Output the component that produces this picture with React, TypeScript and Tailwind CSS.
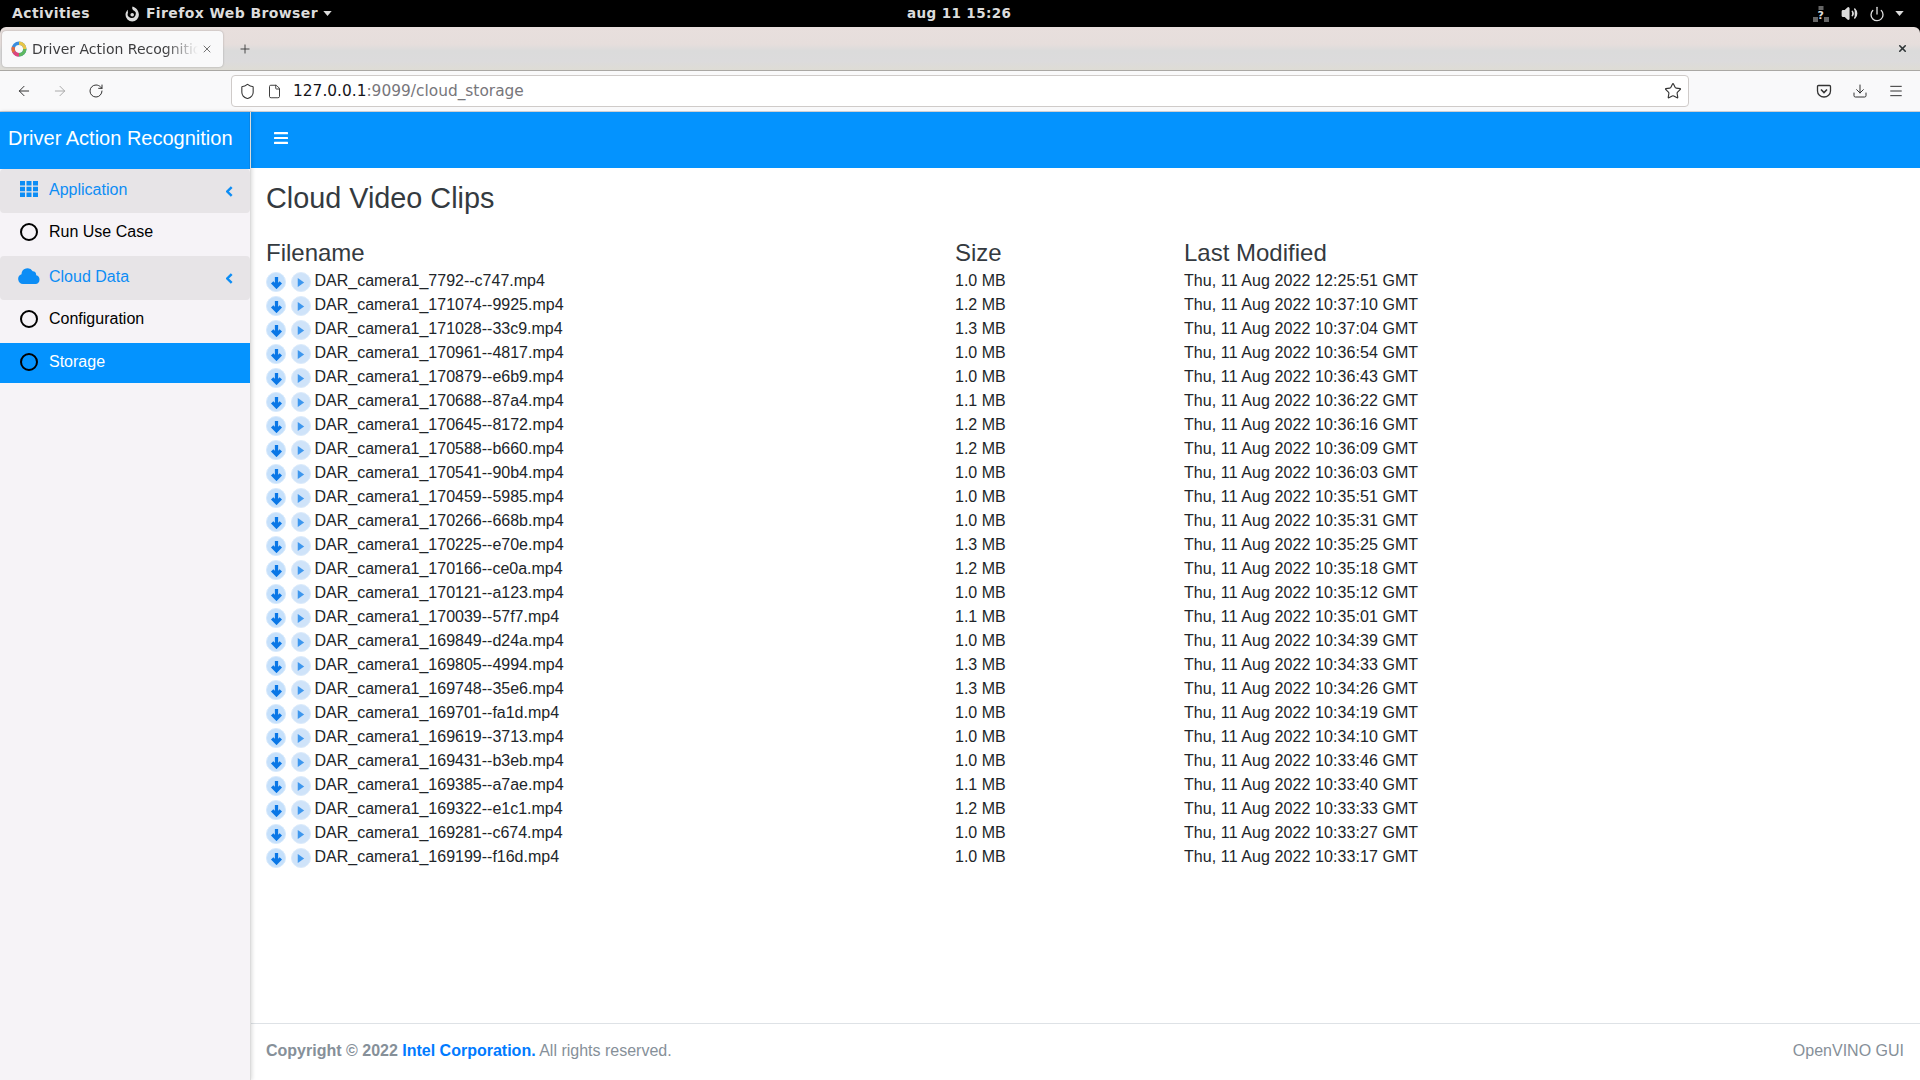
import { ArrowLeft, ArrowRight, RotateCw, Shield, File, Star, Download, Menu, Plus, X, Volume2, Power } from 'lucide-react';

const clips = [
  ['DAR_camera1_7792--c747.mp4', '1.0 MB', 'Thu, 11 Aug 2022 12:25:51 GMT'],
  ['DAR_camera1_171074--9925.mp4', '1.2 MB', 'Thu, 11 Aug 2022 10:37:10 GMT'],
  ['DAR_camera1_171028--33c9.mp4', '1.3 MB', 'Thu, 11 Aug 2022 10:37:04 GMT'],
  ['DAR_camera1_170961--4817.mp4', '1.0 MB', 'Thu, 11 Aug 2022 10:36:54 GMT'],
  ['DAR_camera1_170879--e6b9.mp4', '1.0 MB', 'Thu, 11 Aug 2022 10:36:43 GMT'],
  ['DAR_camera1_170688--87a4.mp4', '1.1 MB', 'Thu, 11 Aug 2022 10:36:22 GMT'],
  ['DAR_camera1_170645--8172.mp4', '1.2 MB', 'Thu, 11 Aug 2022 10:36:16 GMT'],
  ['DAR_camera1_170588--b660.mp4', '1.2 MB', 'Thu, 11 Aug 2022 10:36:09 GMT'],
  ['DAR_camera1_170541--90b4.mp4', '1.0 MB', 'Thu, 11 Aug 2022 10:36:03 GMT'],
  ['DAR_camera1_170459--5985.mp4', '1.0 MB', 'Thu, 11 Aug 2022 10:35:51 GMT'],
  ['DAR_camera1_170266--668b.mp4', '1.0 MB', 'Thu, 11 Aug 2022 10:35:31 GMT'],
  ['DAR_camera1_170225--e70e.mp4', '1.3 MB', 'Thu, 11 Aug 2022 10:35:25 GMT'],
  ['DAR_camera1_170166--ce0a.mp4', '1.2 MB', 'Thu, 11 Aug 2022 10:35:18 GMT'],
  ['DAR_camera1_170121--a123.mp4', '1.0 MB', 'Thu, 11 Aug 2022 10:35:12 GMT'],
  ['DAR_camera1_170039--57f7.mp4', '1.1 MB', 'Thu, 11 Aug 2022 10:35:01 GMT'],
  ['DAR_camera1_169849--d24a.mp4', '1.0 MB', 'Thu, 11 Aug 2022 10:34:39 GMT'],
  ['DAR_camera1_169805--4994.mp4', '1.3 MB', 'Thu, 11 Aug 2022 10:34:33 GMT'],
  ['DAR_camera1_169748--35e6.mp4', '1.3 MB', 'Thu, 11 Aug 2022 10:34:26 GMT'],
  ['DAR_camera1_169701--fa1d.mp4', '1.0 MB', 'Thu, 11 Aug 2022 10:34:19 GMT'],
  ['DAR_camera1_169619--3713.mp4', '1.0 MB', 'Thu, 11 Aug 2022 10:34:10 GMT'],
  ['DAR_camera1_169431--b3eb.mp4', '1.0 MB', 'Thu, 11 Aug 2022 10:33:46 GMT'],
  ['DAR_camera1_169385--a7ae.mp4', '1.1 MB', 'Thu, 11 Aug 2022 10:33:40 GMT'],
  ['DAR_camera1_169322--e1c1.mp4', '1.2 MB', 'Thu, 11 Aug 2022 10:33:33 GMT'],
  ['DAR_camera1_169281--c674.mp4', '1.0 MB', 'Thu, 11 Aug 2022 10:33:27 GMT'],
  ['DAR_camera1_169199--f16d.mp4', '1.0 MB', 'Thu, 11 Aug 2022 10:33:17 GMT'],
];

function TopBar() {
  return (
    <div className="relative flex items-center h-[27px] bg-black text-[#dcdcdc] text-[14px] font-bold tracking-[0.4px] font-['DejaVu_Sans',sans-serif]">
      <span className="ml-[12px]">Activities</span>
      <svg viewBox="0 0 16 16" className="ml-[34px] w-[16px] h-[16px]">
        <path d="M8.500 0.500c-.6 1.500-.2 3 .8 3.800a4 4 0 1 1-5.300 2.200c-.3-.8-.3-1.700 0-2.700C2.500 5 1.500 6.800 1.500 8.800a6.700 6.700 0 1 0 13.400 0C14.900 5 12.200 1.500 8.500 0.500z" fill="#dcdcdc" />
        <circle cx="8.200" cy="8.800" r="1.800" fill="#dcdcdc" />
      </svg>
      <span className="ml-[6px]">Firefox Web Browser</span>
      <svg viewBox="0 0 10 6" className="ml-[5px] w-[9px] h-[5px]"><path d="M0 0h10L5 6z" fill="#dcdcdc" /></svg>
      <span className="absolute left-[907px] text-[13.5px]">aug 11  15:26</span>
      <div className="ml-auto flex items-center mr-[16px]">
        <svg viewBox="0 0 16 16" className="w-[16px] h-[16px] mr-[12px]">
          <rect x="5.500" y="0" width="5" height="4" fill="#666" />
          <rect x="0" y="11" width="5" height="5" fill="#666" />
          <rect x="11" y="11" width="5" height="5" fill="#666" />
          <text x="8" y="13" fontSize="11" fontWeight="700" textAnchor="middle" fill="#ddd">?</text>
        </svg>
        <Volume2 className="w-[17px] h-[17px] mr-[11px] fill-[#dcdcdc]" strokeWidth={2.2} />
        <Power className="w-[16px] h-[16px] mr-[10px]" strokeWidth={2} />
        <svg viewBox="0 0 10 6" className="w-[9px] h-[5px]"><path d="M0 0h10L5 6z" fill="#dcdcdc" /></svg>
      </div>
    </div>
  );
}

function TabStrip() {
  return (
    <div className="flex items-center h-[44px] pl-[2px] pr-[12px] border-b border-[#aaa8a4] rounded-t-[6px] bg-[linear-gradient(#e8dfdd_0%,#e6dedc_40%,#dbdbdb_55%,#dcdbdc_80%,#dedcd5_100%)]">
      <div className="flex items-center w-[221px] h-[36px] bg-[#f9f9fa] rounded-[4px] shadow-[0_0_2px_rgba(0,0,0,0.3)] pl-[9px] pr-[10px]">
        <svg viewBox="0 0 16 16" className="w-[16px] h-[16px] shrink-0" fill="none" strokeWidth="3.400">
          <circle cx="8" cy="8" r="5.800" stroke="#3b8ede" />
          <path d="M8 2.200A5.800 5.800 0 0 1 13.800 8" stroke="#e8c547" />
          <path d="M13.800 8A5.800 5.800 0 0 1 8 13.800" stroke="#5fb85f" />
          <path d="M8 13.800A5.800 5.800 0 0 1 3 11" stroke="#e0457b" />
          <path d="M3 11A5.800 5.800 0 0 1 2.500 6" stroke="#e6693e" />
        </svg>
        <span className="ml-[5px] pt-[1px] w-[166px] overflow-hidden whitespace-nowrap text-[14px] text-[#3d3d3f] font-['DejaVu_Sans',sans-serif] [mask-image:linear-gradient(to_right,black_80%,transparent)]">Driver Action Recognition</span>
        <X className="ml-auto w-[12px] h-[12px] text-[#444]" strokeWidth={1.5} />
      </div>
      <Plus className="ml-[15px] w-[14px] h-[14px] text-[#333]" strokeWidth={1.5} />
      <X className="ml-auto w-[11px] h-[11px] text-[#2e3436]" strokeWidth={3.5} />
    </div>
  );
}

function Toolbar() {
  return (
    <div className="flex items-center h-[41px] bg-[#f9f9fa] border-b border-[#cfcfd3] text-[#333]">
      <ArrowLeft className="ml-[16px] w-[16px] h-[16px]" strokeWidth={1.5} />
      <ArrowRight className="ml-[20px] w-[16px] h-[16px] text-[#aaa]" strokeWidth={1.5} />
      <RotateCw className="ml-[20px] w-[16px] h-[16px]" strokeWidth={1.5} />
      <div className="flex items-center ml-[127px] w-[1458px] h-[32px] bg-white border border-[#cfcbc9] rounded-[4px]">
        <Shield className="ml-[7px] w-[17px] h-[17px]" strokeWidth={1.5} />
        <File className="ml-[11px] w-[15px] h-[15px]" strokeWidth={1.5} />
        <span className="ml-[11px] pt-[1px] text-[15.4px] font-['DejaVu_Sans',sans-serif] text-[#15141a]">127.0.0.1<span className="text-[#77767b]">:9099/cloud_storage</span></span>
        <Star className="ml-auto mr-[6px] w-[18px] h-[18px]" strokeWidth={1.5} />
      </div>
      <svg viewBox="0 0 16 16" className="ml-[127px] w-[16px] h-[16px]" fill="none" stroke="#333" strokeWidth="1.300">
        <path d="M2.500 2.500h11a1 1 0 0 1 1 1V8a6.500 6 0 0 1-13 0V3.500a1 1 0 0 1 1-1z" />
        <path d="M5 6.500 8 9.500 11 6.500" strokeWidth="1.600" />
      </svg>
      <Download className="ml-[20px] w-[16px] h-[16px]" strokeWidth={1.5} />
      <Menu className="ml-[20px] w-[16px] h-[16px]" strokeWidth={1.5} />
    </div>
  );
}

function Ring() {
  return <span className="w-[18px] h-[18px] rounded-full border-2 border-black shrink-0" />;
}

function Caret() {
  return (
    <svg viewBox="0 0 8 12" className="ml-auto mr-[17px] mt-[2px] w-[7px] h-[11px]">
      <path d="M6.500 1 1.500 6l5 5" fill="none" stroke="#0d8df5" strokeWidth="2.800" />
    </svg>
  );
}

function Sidebar() {
  return (
    <aside className="w-[251px] shrink-0 flex flex-col bg-[#f6f3f7] border-r border-[#dcdcdc] shadow-[1px_0_4px_rgba(0,0,0,0.15)] z-10 text-[16px]">
      <div className="flex items-center h-[57px] pl-[8px] pb-[5px] bg-[#0493fe] text-white text-[20px] border-r border-[#0a86e6]">Driver Action Recognition</div>
      <div className="flex items-center h-[44px] pb-[2px] rounded-[4px] bg-[#e7e4e7] text-[#0d8df5]">
        <svg viewBox="0 0 18 16" className="ml-[20px] -mt-[2px] w-[18px] h-[16px]" fill="#0d8df5">
          <rect x="0" y="0" width="5" height="4.500" /><rect x="6.500" y="0" width="5" height="4.500" /><rect x="13" y="0" width="5" height="4.500" />
          <rect x="0" y="5.750" width="5" height="4.500" /><rect x="6.500" y="5.750" width="5" height="4.500" /><rect x="13" y="5.750" width="5" height="4.500" />
          <rect x="0" y="11.500" width="5" height="4.500" /><rect x="6.500" y="11.500" width="5" height="4.500" /><rect x="13" y="11.500" width="5" height="4.500" />
        </svg>
        <span className="ml-[11px]">Application</span>
        <Caret />
      </div>
      <div className="flex items-center h-[43px] pb-[5px] pl-[20px] gap-[11px] text-black"><Ring />Run Use Case</div>
      <div className="flex items-center h-[44px] pb-[2px] rounded-[4px] bg-[#e7e4e7] text-[#0d8df5]">
        <svg viewBox="0 0 22 16" className="ml-[18px] -mt-[2px] w-[22px] h-[16px]" fill="#0d8df5">
          <path d="M5 16a5 5 0 0 1-1.500-9.700A6 6 0 0 1 14.700 3.300 3.800 3.800 0 0 1 18.200 7.200 4.500 4.500 0 0 1 17.500 16z" />
        </svg>
        <span className="ml-[9px]">Cloud Data</span>
        <Caret />
      </div>
      <div className="flex items-center h-[43px] pb-[5px] pl-[20px] gap-[11px] text-black"><Ring />Configuration</div>
      <div className="flex items-center h-[40px] pb-[3px] pl-[20px] gap-[11px] bg-[#0493fe] text-white"><Ring />Storage</div>
    </aside>
  );
}

function ClipIcons() {
  return (
    <span className="flex items-center gap-[4.5px] mr-[4px] mt-[2px]">
      <span className="flex items-center justify-center w-[20px] h-[20px] rounded-full bg-[#c5e0fb] border border-[#d8eafc]">
        <svg viewBox="0 0 12 12" className="w-[13px] h-[13px]"><path d="M6 1v9M2 5.800 6 10l4-4.200" fill="none" stroke="#0a77e6" strokeWidth="3" /></svg>
      </span>
      <span className="flex items-center justify-center w-[20px] h-[20px] rounded-full bg-[#cfe3f9] border border-[#dcebfb]">
        <svg viewBox="0 0 12 12" className="w-[11px] h-[11px]"><path d="M3 1 10 6 3 11z" fill="#3e97ee" /></svg>
      </span>
    </span>
  );
}

export default function App() {
  return (
    <div className="flex flex-col w-[1920px] h-[1080px] overflow-hidden bg-black font-['Liberation_Sans',Arial,sans-serif]">
      <TopBar />
      <TabStrip />
      <Toolbar />
      <div className="flex flex-1 min-h-0">
        <Sidebar />
        <div className="flex-1 flex flex-col bg-white">
          <nav className="flex items-center h-[56px] bg-[#0493fe] pl-[23px] pb-[4px]">
            <svg viewBox="0 0 14 12" className="w-[14px] h-[12px]" fill="white">
              <rect y="0" width="14" height="2.200" rx="0.500" /><rect y="4.900" width="14" height="2.200" rx="0.500" /><rect y="9.800" width="14" height="2.200" rx="0.500" />
            </svg>
          </nav>
          <main className="flex-1 pl-[15px] pt-[13px] text-[#212529]">
            <h1 className="text-[28.8px] leading-[35px] text-[#343a40]">Cloud Video Clips</h1>
            <div className="grid grid-cols-[689px_229px_1fr] mt-[22px]">
              <span className="text-[24px] leading-[29px] pb-[2px] text-[#343a40]">Filename</span>
              <span className="text-[24px] leading-[29px] pb-[2px] text-[#343a40]">Size</span>
              <span className="text-[24px] leading-[29px] pb-[2px] text-[#343a40]">Last Modified</span>
              {clips.map(([name, size, modified]) => (
                <div key={name} className="col-span-3 grid grid-cols-subgrid h-[24px] text-[16px] leading-[24px]">
                  <span className="flex items-center"><ClipIcons />{name}</span>
                  <span>{size}</span>
                  <span className="tracking-[0.08px]">{modified}</span>
                </div>
              ))}
            </div>
          </main>
          <footer className="flex items-center justify-between h-[57px] pb-[2px] border-t border-[#dee2e6] pl-[15px] pr-[16px] text-[16px] text-[#869099]">
            <span><b>Copyright © 2022 <span className="text-[#007bff]">Intel Corporation.</span></b> All rights reserved.</span>
            <span>OpenVINO GUI</span>
          </footer>
        </div>
      </div>
    </div>
  );
}
